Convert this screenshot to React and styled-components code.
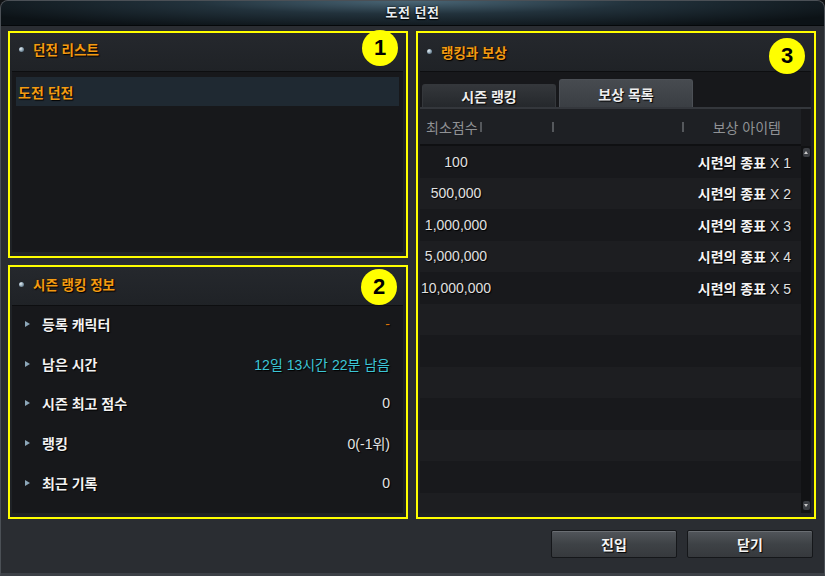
import styled, { createGlobalStyle } from "styled-components";

const GlobalStyle = createGlobalStyle`
  html, body {
    margin: 0;
    padding: 0;
    background: #101214;
  }
  body {
    font-family: "Liberation Sans", "Noto Sans CJK KR", sans-serif;
    font-size: 14px;
  }
`;

const Window = styled.div`
  width: 825px;
  height: 576px;
  box-sizing: border-box;
  display: flex;
  flex-direction: column;
  background: #2a2d32;
  border: 1px solid #4b5056;
  border-bottom: 3px solid #3c4046;
  border-radius: 8px 8px 0 0;
  overflow: hidden;
`;

const TitleBar = styled.div`
  height: 25px;
  flex: none;
  box-sizing: border-box;
  padding-bottom: 4px;
  display: flex;
  align-items: center;
  justify-content: center;
  background: radial-gradient(ellipse 60% 120% at 50% 0%, #4a6676 0%, #22323c 45%, #0c1216 100%);
  border-bottom: 1px solid #05080a;
  color: #e8eef2;
  font-weight: bold;
  font-size: 13px;
  text-shadow: 0 1px 1px #000, 0 0 2px #000;
  letter-spacing: 0.5px;
`;

const Body = styled.div`
  display: grid;
  grid-template-columns: 400px 400px;
  column-gap: 8px;
  padding: 5px 0 0 7px;
  height: 488px;
  box-sizing: border-box;
`;

const Column = styled.div`
  display: flex;
  flex-direction: column;
  gap: 7px;
`;

const Panel = styled.section`
  position: relative;
  height: ${(p) => p.$h}px;
  box-sizing: border-box;
  border: 2px solid #ffff00;
  background: linear-gradient(#25282d, #1f2226 40px);
  display: flex;
  flex-direction: column;
  padding: 0 3px 4px 2px;
`;

const PanelHeader = styled.div`
  height: 38px;
  flex: none;
  box-sizing: border-box;
  padding: 0 0 ${(p) => p.$lift || 0}px 7px;
  display: flex;
  align-items: center;
  gap: 9px;
  color: #f39b12;
  font-weight: bold;
  font-size: 13.5px;
  text-shadow: 1px 1px 1px #000, 0 0 2px #3a2000;
`;

const Dot = styled.span`
  width: 5px;
  height: 5px;
  border-radius: 50%;
  background: radial-gradient(circle at 35% 35%, #e6f0f6, #7890a0 60%, #3a4a56);
`;

const Badge = styled.div`
  position: absolute;
  top: ${(p) => p.$top}px;
  right: ${(p) => p.$right}px;
  width: 36px;
  height: 36px;
  border-radius: 50%;
  background: #ffff00;
  color: #000;
  font-family: "Liberation Sans", Arial, sans-serif;
  font-weight: bold;
  font-size: 22px;
  display: flex;
  align-items: center;
  justify-content: center;
`;

const Content = styled.div`
  flex: 1;
  background: #17181b;
  border-top: 1px solid #0d0e10;
  display: flex;
  flex-direction: column;
  overflow: hidden;
`;

const ListRow = styled.div`
  margin: 5px 4px 0 4px;
  height: 29px;
  background: #1f2932;
  display: flex;
  align-items: center;
  padding-left: 2px;
  color: #f39b12;
  font-weight: bold;
  text-shadow: 1px 1px 1px #000;
`;

const InfoList = styled.div`
  padding: 0 13px;
  margin-top: -2px;
`;

const InfoRow = styled.div`
  height: 39.7px;
  display: flex;
  align-items: center;
`;

const Arrow = styled.span`
  width: 0;
  height: 0;
  border-top: 3px solid transparent;
  border-bottom: 3px solid transparent;
  border-left: 5px solid #8ca6b8;
  margin-right: 12px;
`;

const Label = styled.span`
  color: #f2f2f2;
  font-weight: bold;
  text-shadow: 1px 1px 1px #000;
  flex: 1;
`;

const Value = styled.span`
  color: ${(p) => p.$color || "#e4e4e4"};
  text-shadow: 1px 1px 1px #000;
`;

const TabBar = styled.div`
  flex: none;
  display: flex;
  align-items: flex-end;
  gap: 3px;
  padding: 7px 0 0 2px;
  border-bottom: 2px solid #34373c;
`;

const Tab = styled.div`
  width: 134px;
  height: ${(p) => (p.$active ? 28 : 23)}px;
  box-sizing: border-box;
  display: flex;
  align-items: center;
  justify-content: center;
  border-radius: 3px 3px 0 0;
  border: 1px solid ${(p) => (p.$active ? "#4c5056" : "#34373b")};
  border-bottom: none;
  background: ${(p) =>
    p.$active
      ? "linear-gradient(#474b50, #3a3e43)"
      : "linear-gradient(#34373b, #25282c)"};
  color: #eeeeee;
  font-weight: bold;
  text-shadow: 1px 1px 1px #000;
`;

const TableHead = styled.div`
  flex: none;
  height: 35px;
  display: grid;
  grid-template-columns: 62px 72px 130px 1fr;
  align-items: center;
  background: #1e2024;
  border-bottom: 2px solid #0f1012;
  color: #909295;
  margin-right: 10px;
`;

const HeadCell = styled.div`
  position: relative;
  padding-left: ${(p) => p.$pad || 0}px;
  text-align: ${(p) => p.$align || "left"};
  padding-right: ${(p) => p.$padR || 0}px;
  &::after {
    content: "";
    display: ${(p) => (p.$sep ? "block" : "none")};
    position: absolute;
    right: 0;
    top: 50%;
    margin-top: -5px;
    width: 2px;
    height: 10px;
    background: #55585c;
  }
`;

const TableBody = styled.div`
  flex: 1;
  display: flex;
  overflow: hidden;
`;

const Rows = styled.div`
  flex: 1;
  display: flex;
  flex-direction: column;
`;

const Row = styled.div`
  height: 31.5px;
  flex: none;
  display: grid;
  grid-template-columns: 72px 1fr;
  align-items: center;
  background: ${(p) => (p.$alt ? "#1d1e21" : "#18191c")};
`;

const Score = styled.span`
  text-align: center;
  color: #e0e0e0;
  text-shadow: 1px 1px 1px #000;
`;

const Reward = styled.span`
  text-align: right;
  padding-right: 10px;
  color: #e0e0e0;
  text-shadow: 1px 1px 1px #000;
  b {
    color: #f4f4f4;
  }
`;

const ScrollTrack = styled.div`
  width: 10px;
  flex: none;
  background: #111214;
  display: flex;
  flex-direction: column;
  justify-content: space-between;
  align-items: center;
  padding: 2px 0 3px;
`;

const ScrollBtn = styled.div`
  width: 7px;
  height: 9px;
  border-radius: 2px;
  background: #3c3f44;
  display: flex;
  align-items: center;
  justify-content: center;
  &::before {
    content: "";
    border-left: 2px solid transparent;
    border-right: 2px solid transparent;
    ${(p) => (p.$down ? "border-top" : "border-bottom")}: 3px solid #c8c8c8;
  }
`;

const Footer = styled.div`
  display: flex;
  justify-content: flex-end;
  gap: 10px;
  padding: 16px 11px 0 0;
`;

const Button = styled.button`
  width: 126px;
  height: 28px;
  border: 1px solid #15171a;
  border-radius: 2px;
  background: linear-gradient(#52565b, #3e4246 50%, #36393d);
  box-shadow: inset 0 1px 0 #6a6e73;
  color: #f4f4f4;
  font-family: "Liberation Sans", "Noto Sans CJK KR", sans-serif;
  font-size: 14px;
  font-weight: bold;
  text-shadow: 1px 1px 1px #000;
`;

const info = [
  { label: "등록 캐릭터", value: "-", color: "#d9750b" },
  { label: "남은 시간", value: "12일 13시간 22분 남음", color: "#3cc6d6" },
  { label: "시즌 최고 점수", value: "0" },
  { label: "랭킹", value: "0(-1위)" },
  { label: "최근 기록", value: "0" },
];

const rewards = ["100", "500,000", "1,000,000", "5,000,000", "10,000,000"];

export default function App() {
  const rows = Array.from({ length: 12 }, (_, i) => i);
  return (
    <>
      <GlobalStyle />
      <Window>
        <TitleBar>도전 던전</TitleBar>
        <Body>
          <Column>
            <Panel $h={227}>
              <PanelHeader $lift={6}>
                <Dot />
                던전 리스트
              </PanelHeader>
              <Badge $top={-3} $right={8}>1</Badge>
              <Content>
                <ListRow>도전 던전</ListRow>
              </Content>
            </Panel>
            <Panel $h={254}>
              <PanelHeader $lift={4}>
                <Dot />
                시즌 랭킹 정보
              </PanelHeader>
              <Badge $top={2} $right={9}>2</Badge>
              <Content>
                <InfoList>
                  {info.map((r) => (
                    <InfoRow key={r.label}>
                      <Arrow />
                      <Label>{r.label}</Label>
                      <Value $color={r.color}>{r.value}</Value>
                    </InfoRow>
                  ))}
                </InfoList>
              </Content>
            </Panel>
          </Column>
          <Panel $h={488}>
            <PanelHeader $lift={1}>
              <Dot />
              랭킹과 보상
            </PanelHeader>
            <Badge $top={5} $right={9}>3</Badge>
            <Content>
              <TabBar>
                <Tab>시즌 랭킹</Tab>
                <Tab $active>보상 목록</Tab>
              </TabBar>
              <TableHead>
                <HeadCell $pad={6} $sep>최소점수</HeadCell>
                <HeadCell $sep />
                <HeadCell $sep />
                <HeadCell $align="right" $padR={20}>보상 아이템</HeadCell>
              </TableHead>
              <TableBody>
                <Rows>
                  {rows.map((i) => (
                    <Row key={i} $alt={i % 2 === 1}>
                      <Score>{rewards[i] || ""}</Score>
                      <Reward>
                        {rewards[i] && (
                          <>
                            <b>시련의 종표</b> X {i + 1}
                          </>
                        )}
                      </Reward>
                    </Row>
                  ))}
                </Rows>
                <ScrollTrack>
                  <ScrollBtn />
                  <ScrollBtn $down />
                </ScrollTrack>
              </TableBody>
            </Content>
          </Panel>
        </Body>
        <Footer>
          <Button>진입</Button>
          <Button>닫기</Button>
        </Footer>
      </Window>
    </>
  );
}
